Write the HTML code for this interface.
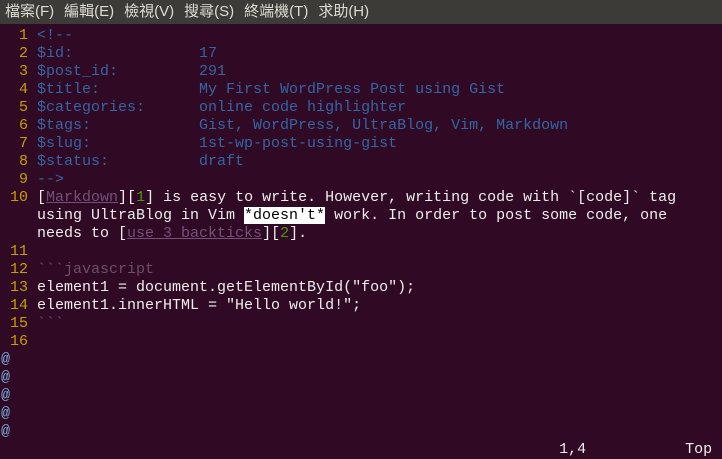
<!DOCTYPE html>
<html><head><meta charset="utf-8"><style>
body{margin:0;width:722px;height:458px;background:#300a24;overflow:hidden;}
.menu{height:24px;background:#3c3b37;color:#dfdbd2;font:15px "Liberation Sans","Noto Sans CJK TC",sans-serif;line-height:24px;padding-left:5px;white-space:pre;}
.menu span{margin-right:10px}
pre{margin:0;position:absolute;top:27px;left:1px;font:15px/18px "Liberation Mono",monospace;color:#eeeeec;}
.n{color:#c4a000}.c{color:#3465a4}.l{color:#75507b;text-decoration:underline}.g{color:#4e9a06}
.t{color:#6e4e68}.h{background:#fff;color:#000}.a{color:#729fcf;font-weight:bold}
</style></head><body>
<div class="menu"><span>檔案(F)</span><span>編輯(E)</span><span>檢視(V)</span><span>搜尋(S)</span><span>終端機(T)</span><span>求助(H)</span></div>
<pre><span class="n">  1 </span><span class="c">&lt;!--</span>
<span class="n">  2 </span><span class="c">$id:              17</span>
<span class="n">  3 </span><span class="c">$post_id:         291</span>
<span class="n">  4 </span><span class="c">$title:           My First WordPress Post using Gist</span>
<span class="n">  5 </span><span class="c">$categories:      online code highlighter</span>
<span class="n">  6 </span><span class="c">$tags:            Gist, WordPress, UltraBlog, Vim, Markdown</span>
<span class="n">  7 </span><span class="c">$slug:            1st-wp-post-using-gist</span>
<span class="n">  8 </span><span class="c">$status:          draft</span>
<span class="n">  9 </span><span class="c">--&gt;</span>
<span class="n"> 10 </span>[<span class="l">Markdown</span>][<span class="g">1</span>] is easy to write. However, writing code with &#96;[code]&#96; tag
    using UltraBlog in Vim <span class="h">*doesn't*</span> work. In order to post some code, one
    needs to [<span class="l">use 3 backticks</span>][<span class="g">2</span>].
<span class="n"> 11 </span>
<span class="n"> 12 </span><span class="t">&#96;&#96;&#96;javascript</span>
<span class="n"> 13 </span>element1 = document.getElementById("foo");
<span class="n"> 14 </span>element1.innerHTML = "Hello world!";
<span class="n"> 15 </span><span class="t">&#96;&#96;&#96;</span>
<span class="n"> 16 </span>
<span class="a">@</span>
<span class="a">@</span>
<span class="a">@</span>
<span class="a">@</span>
<span class="a">@</span>
                                                              1,4           Top</pre>
</body></html>
